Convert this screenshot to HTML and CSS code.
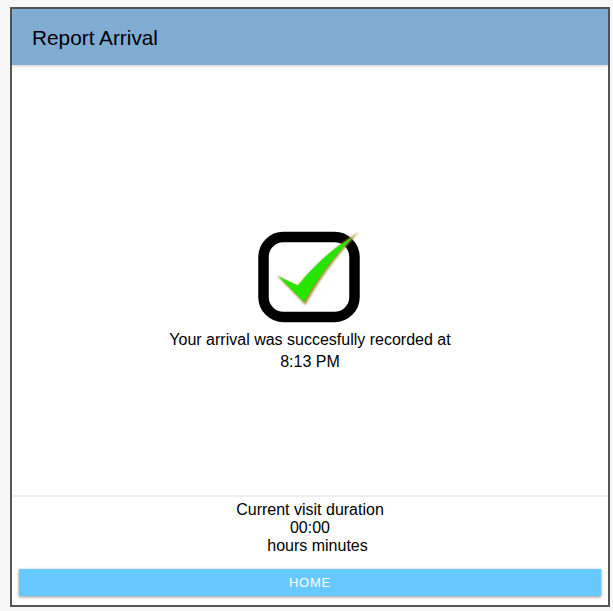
FILE: index.html
```html
<!DOCTYPE html>
<html lang="en">
<head>
<meta charset="utf-8">
<title>Report Arrival</title>
<link rel="stylesheet" href="styles.css">
</head>
<body>
<div class="frame">
  <header class="bar"><h1 class="title">Report Arrival</h1></header>
  <main class="main">
    <svg class="check" width="140" height="140" viewBox="0 -1 140 140" aria-hidden="true">
      <defs>
        <filter id="soft" x="-10%" y="-10%" width="120%" height="120%"><feGaussianBlur stdDeviation="0.7"/></filter>
        <filter id="softer" x="-10%" y="-10%" width="120%" height="120%"><feGaussianBlur stdDeviation="0.9"/></filter>
      </defs>
      <rect x="23.5" y="49" width="91" height="80" rx="20" fill="#fff" stroke="#000" stroke-width="10.5" filter="url(#soft)"/>
      <path d="M36.7 87.5 L57.5 98 C72 81 92 60 119 44 C100 64 81 88 65.5 117 Z" fill="#a8903a" filter="url(#softer)"/>
      <path d="M38.5 88.5 L58 97.5 C73 79 90 62 113 49 C98 64 80 86 64 114 Z" fill="#26e600" filter="url(#soft)"/>
    </svg>
    <p class="message">Your arrival was succesfully recorded at<br>8:13 PM</p>
  </main>
  <footer class="foot">
    <div class="duration">
      <div>Current visit duration</div>
      <div>00:00</div>
      <div class="units">hours minutes</div>
    </div>
    <button class="home" type="button">HOME</button>
  </footer>
</div>
</body>
</html>
```

FILE: styles.css
```css
* { box-sizing: border-box; }
html, body { margin: 0; padding: 0; }
body {
  background: #f7f7f7;
  font-family: "Liberation Sans", Arial, sans-serif;
  color: #000;
  padding: 7px 3px 4px 10px;
}
.frame {
  width: 600px;
  height: 600px;
  border: 2px solid #555;
  background: #fff;
  display: flex;
  flex-direction: column;
}
.bar {
  height: 56px;
  flex: none;
  background: #80abd2;
  display: flex;
  align-items: center;
  padding: 2px 0 0 20px;
  box-shadow: 0 1px 3px rgba(0, 0, 0, 0.2);
}
.title {
  margin: 0;
  font-size: 20.8px;
  font-weight: 400;
}
.main {
  flex: 1;
  display: flex;
  flex-direction: column;
  align-items: center;
  justify-content: center;
}
.check { display: block; }
.message {
  margin: 2px 0 0;
  font-size: 16px;
  line-height: 22px;
  text-align: center;
}
.foot {
  flex: none;
  height: 110px;
  border-top: 2px solid #eee;
  padding: 4px 7px 0;
}
.duration {
  font-size: 16px;
  line-height: 18px;
  text-align: center;
}
.units { padding-left: 15px; }
.home {
  display: block;
  width: 582px;
  height: 27px;
  margin-top: 14px;
  border: 0;
  border-radius: 0;
  padding: 0;
  background: #66c8ff;
  color: #fff;
  font-family: "Liberation Sans", Arial, sans-serif;
  font-size: 13px;
  letter-spacing: 0.8px;
  box-shadow: 0 1px 3px rgba(0, 0, 0, 0.45);
}
```
